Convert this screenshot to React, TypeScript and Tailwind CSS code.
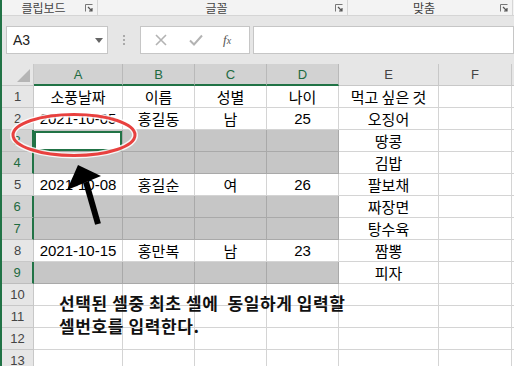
const cols = ['A', 'B', 'C', 'D', 'E', 'F']
const selCols = ['A', 'B', 'C', 'D']

// sel => A-D of that row are part of the gray selection
const rows: { n: number; cells: string[]; sel: boolean }[] = [
    { n: 1, cells: ['소풍날짜', '이름', '성별', '나이', '먹고 싶은 것', ''], sel: false },
    { n: 2, cells: ['2021-10-05', '홍길동', '남', '25', '오징어', ''], sel: false },
    { n: 3, cells: ['', '', '', '', '땅콩', ''], sel: true },
    { n: 4, cells: ['', '', '', '', '김밥', ''], sel: true },
    { n: 5, cells: ['2021-10-08', '홍길순', '여', '26', '팔보채', ''], sel: false },
    { n: 6, cells: ['', '', '', '', '짜장면', ''], sel: true },
    { n: 7, cells: ['', '', '', '', '탕수육', ''], sel: true },
    { n: 8, cells: ['2021-10-15', '홍만복', '남', '23', '짬뽕', ''], sel: false },
    { n: 9, cells: ['', '', '', '', '피자', ''], sel: true },
    { n: 10, cells: ['', '', '', '', '', ''], sel: false },
    { n: 11, cells: ['', '', '', '', '', ''], sel: false },
    { n: 12, cells: ['', '', '', '', '', ''], sel: false },
    { n: 13, cells: ['', '', '', '', '', ''], sel: false },
]

function Launcher() {
    return (
        <svg width="8" height="8" viewBox="0 0 8 8" className="shrink-0">
            <path d="M0.5 7.5V0.5H7.5" fill="none" stroke="#777" strokeWidth="1" />
            <path d="M3 3L7 7M7 4V7H4" fill="none" stroke="#555" strokeWidth="1.2" />
        </svg>
    )
}

function RibbonGroup({ label, width }: { label: string; width: string }) {
    return (
        <div className={`${width} h-full flex items-center border-r border-[#d6d6d6] pr-[4px]`}>
            <span className="flex-1 text-center text-[12px] text-[#444]">{label}</span>
            <Launcher />
        </div>
    )
}

export default function App() {
    return (
        <div className="relative w-[514px] h-[366px] overflow-hidden bg-[#e6e6e6] border-l-2 border-[#217346] font-['Noto_Sans_CJK_KR','Noto_Sans',sans-serif]">
            {/* ribbon group labels */}
            <div className="h-[16px] flex bg-[#f3f3f3] border-b border-[#d5d5d5] leading-none">
                <RibbonGroup label="클립보드" width="w-[96px]" />
                <RibbonGroup label="글꼴" width="w-[250px]" />
                <RibbonGroup label="맞춤" width="w-[165px]" />
            </div>

            {/* formula bar */}
            <div className="h-[48px] pt-[10px] flex items-start">
                <div className="ml-[4px] w-[102px] h-[28px] bg-white border border-[#c6c6c6] flex items-center pl-[6px] pr-[4px]">
                    <span className="flex-1 text-[14px] text-[#222] font-['Liberation_Sans',sans-serif]">A3</span>
                    <svg width="8" height="5" viewBox="0 0 8 5"><path d="M0 0H8L4 5Z" fill="#666" /></svg>
                </div>
                <div className="w-[32px] h-[28px] flex flex-col items-center justify-center gap-[2px]">
                    <span className="w-[2px] h-[2px] bg-[#aaa]" />
                    <span className="w-[2px] h-[2px] bg-[#aaa]" />
                    <span className="w-[2px] h-[2px] bg-[#aaa]" />
                </div>
                <div className="w-[110px] h-[28px] bg-white border border-[#c6c6c6] flex items-center">
                    <svg width="12" height="12" viewBox="0 0 12 12" className="ml-[14px]">
                        <path d="M1 1L11 11M11 1L1 11" stroke="#b3b3b3" strokeWidth="1.6" />
                    </svg>
                    <svg width="14" height="12" viewBox="0 0 14 12" className="ml-[22px]">
                        <path d="M1 6.5L5 10.5L13 1.5" fill="none" stroke="#b3b3b3" strokeWidth="2" />
                    </svg>
                    <span className="ml-[20px] text-[13px] italic text-[#555] font-['Liberation_Serif',serif]">
                        f<span className="text-[10px]">x</span>
                    </span>
                </div>
                <div className="ml-[3px] flex-1 h-[28px] bg-white border border-[#c6c6c6]" />
            </div>

            {/* sheet */}
            <div className="grid grid-cols-[32px_89px_72px_72px_72px_100px_73px_1fr] bg-white text-[15px] text-black leading-none">
                {/* header row */}
                <div className="h-[22px] bg-[#e6e6e6] border-r border-b border-[#c8c8c8] flex items-end justify-end p-[3px]">
                    <svg width="13" height="13" viewBox="0 0 13 13"><path d="M13 0V13H0Z" fill="#b5b5b5" /></svg>
                </div>
                {cols.map(c => {
                    const sel = selCols.includes(c)
                    return (
                        <div
                            key={c}
                            className={`h-[22px] flex items-center justify-center border-r font-['Liberation_Sans',sans-serif] text-[13px] ${sel ? 'bg-[#d2d2d2] text-[#1e6b41] border-b-2 border-b-[#217346] border-r-[#b9b9b9]' : 'bg-[#e6e6e6] text-[#444] border-b border-b-[#c8c8c8] border-r-[#c8c8c8]'}`}
                        >
                            {c}
                        </div>
                    )
                })}
                <div className="h-[22px] bg-[#e6e6e6] border-b border-[#c8c8c8]" />

                {rows.map(r => (
                    <div key={r.n} className="contents">
                        <div
                            className={`h-[22px] flex items-center justify-center text-[13px] font-['Liberation_Sans',sans-serif] border-b ${r.sel ? 'bg-[#d2d2d2] text-[#1e6b41] border-r-2 border-r-[#217346] border-b-[#bdbdbd]' : 'bg-[#e6e6e6] text-[#444] border-r border-r-[#c8c8c8] border-b-[#c8c8c8]'}`}
                        >
                            {r.n}
                        </div>
                        {r.cells.map((v, i) => {
                            const gray = r.sel && i < 4
                            const active = r.n === 3 && i === 0
                            const num = /^[0-9-]+$/.test(v)
                            return (
                                <div
                                    key={i}
                                    className={`h-[22px] flex items-center justify-center border-r border-b ${gray ? 'bg-[#c6c6c6] border-[#a9a9a9]' : 'border-[#d4d4d4]'} ${num ? "font-['Liberation_Sans',sans-serif]" : ''}`}
                                >
                                    {active && <div className="w-[88px] h-[20px] bg-white border-2 border-[#217346]" />}
                                    {v}
                                </div>
                            )
                        })}
                        <div className="h-[22px] border-b border-[#d4d4d4]" />
                    </div>
                ))}
            </div>

            {/* annotation text box */}
            <div className="absolute left-[57px] top-[291px] text-[17px] font-bold leading-[23px] tracking-[0.6px] text-[#111] whitespace-pre">
                {'선택된 셀중 최초 셀에  동일하게 입력할\n셀번호를 입력한다.'}
            </div>

            {/* red ellipse + arrow */}
            <svg className="absolute left-[-2px] top-0 pointer-events-none" width="514" height="366" viewBox="0 0 514 366">
                <ellipse cx="74" cy="135" rx="61" ry="20.5" fill="none" stroke="#fff" strokeWidth="6" opacity="0.85" />
                <ellipse cx="74" cy="135" rx="61" ry="20.5" fill="none" stroke="#e8413f" strokeWidth="3" />
                <line x1="86" y1="182" x2="98" y2="224" stroke="#000" strokeWidth="6" />
                <polygon points="78,165 67,190 101,176" fill="#000" />
            </svg>
        </div>
    )
}
